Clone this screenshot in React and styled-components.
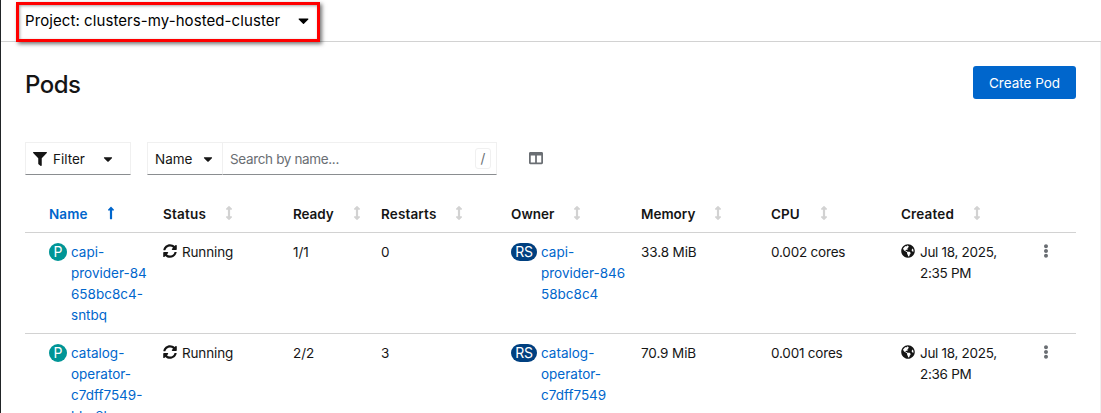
import React from 'react';
import styled, { createGlobalStyle } from 'styled-components';
import { FaFilter, FaCaretDown, FaLongArrowAltUp, FaArrowsAltV, FaColumns, FaEllipsisV, FaGlobeAmericas, FaSyncAlt } from 'react-icons/fa';

const GlobalStyle = createGlobalStyle`
  * { box-sizing: border-box; }
  body { margin: 0; background: #fff; color: #151515; font: 13.5px/21px Inter, "Open Sans", sans-serif; overflow: hidden; }
  svg { display: block; flex: none; }
`;
const PlainButton = styled.button`
  font: inherit; color: inherit; background: none; border: 0; padding: 0;
`;
const Page = styled.div`
  height: 413px; overflow: hidden; border-left: 1px solid #212427;
  display: flex; flex-direction: column;
`;
const ProjectBar = styled.header`
  height: 42px; flex: none; border-bottom: 1px solid #d2d2d2; padding: 2px 0 0 15px;
`;
const ProjectSelector = styled(PlainButton)`
  display: flex; align-items: center; justify-content: space-between;
  width: 304px; height: 40px; padding: 0 5px 3px 6px; border: 3px solid #f00;
  box-shadow: 2px 2px 4px rgba(0,0,0,.55), inset 1px 1px 3px rgba(0,0,0,.35);
  position: relative; color: #000;
`;
const Main = styled.main`
  flex: 1; border-right: 1px solid #f0f0f0; padding: 24px 24px 0;
`;
const TitleRow = styled.div`
  display: flex; justify-content: space-between; height: 76px; align-items: flex-start;
`;
const Title = styled.h1`
  margin: 3px 0 0; font-size: 24px; line-height: 31px; font-weight: 500; letter-spacing: -0.5px;
`;
const PrimaryButton = styled(PlainButton)`
  background: #06c; color: #fff; width: 103px; height: 33px; border-radius: 3px; padding-top: 2px;
`;
const Toolbar = styled.div`
  display: flex; height: 33px; align-items: stretch;
`;
const Control = styled(PlainButton)`
  border: 1px solid #f0f0f0; border-bottom-color: #8a8d90;
  display: flex; align-items: center; width: ${p => p.$w}px; margin-left: ${p => p.$ml || 0}px;
  padding: 0 0 0 7px; white-space: nowrap;
`;
const Label = styled.span`
  font-size: ${p => p.$size || 13.5}px; letter-spacing: ${p => p.$ls || 0}px; white-space: nowrap;
  margin: 0 ${p => p.$mr || 0}px 0 ${p => p.$ml || 0}px; padding-top: ${p => p.$drop || 0}px;
`;
const SearchBox = styled.div`
  width: 274px; border: 1px solid #f0f0f0; border-left: 0; border-bottom-color: #8a8d90;
  display: flex; align-items: center; justify-content: space-between; padding: 0 5px 0 7px; color: #6a6e73;
`;
const KeyHint = styled.kbd`
  width: 16px; height: 21px; border: 1px solid #f0f0f0; border-radius: 3px; font: inherit; line-height: 19px; text-align: center;
`;
const ColumnsButton = styled(PlainButton)`
  display: flex; align-items: center; margin: 0 0 2px 32px; color: #6a6e73;
`;
const Row = styled.div`
  display: grid; grid-template-columns: 114px 130px 88px 130px 130px 130px 130px 138px 1fr;
  padding: 9px 0 6px 24px; height: 101px; border-bottom: 1px solid #d2d2d2;
`;
const HeaderRow = styled(Row)`
  height: 33px; margin-top: 25px; padding: 4px 0 0 24px; font-weight: 600;
`;
const HeadCell = styled.div`
  display: flex; color: ${p => p.$active ? '#06c' : '#151515'};
  svg { color: ${p => p.$active ? '#06c' : '#d2d2d2'}; margin-top: 2px; }
`;
const HeadText = styled.span`
  width: ${p => p.$w}px; letter-spacing: ${p => p.$ls || 0}px;
`;
const Cell = styled.div`
  display: flex; align-items: flex-start; white-space: pre-line; letter-spacing: ${p => p.$ls || 0}px;
  > svg { margin: 2px 5px 0 0; }
`;
const Badge = styled.span`
  flex: none; width: ${p => p.$w}px; height: 18px; border-radius: 9px; background: ${p => p.$bg};
  color: #fff; text-align: center; font-size: 14px; line-height: 18px; margin: 1px 4px 0 0; letter-spacing: ${p => p.$ls || 0}px;
`;
const Link = styled.a`
  color: #06c; white-space: pre;
`;
const Kebab = styled(PlainButton)`
  color: #6a6e73; align-self: start; margin-top: 2px; width: 14px; height: 14px;
`;

const headers = [
  ['Name', 55, 0.1, true], ['Status', 59, 0.2], ['Ready', 57, -0.1], ['Restarts', 71, 0.15],
  ['Owner', 59, 0], ['Memory', 70, 0], ['CPU', 46, 0.1], ['Created', 69, 0.15],
];
const pods = [
  { name: 'capi-\nprovider-84\n658bc8c4-\nsntbq', ready: '1/1', restarts: '0', owner: 'capi-\nprovider-846\n58bc8c4', memory: '33.8 MiB', cpu: '0.002 cores', created: 'Jul 18, 2025,\n2:35 PM' },
  { name: 'catalog-\noperator-\nc7dff7549-\nhhg8h', ready: '2/2', restarts: '3', owner: 'catalog-\noperator-\nc7dff7549', memory: '70.9 MiB', cpu: '0.001 cores', created: 'Jul 18, 2025,\n2:36 PM' },
];

export default function App() {
  return (
    <Page>
      <GlobalStyle />
      <ProjectBar>
        <ProjectSelector><Label $size={15} $ls={0.08}>Project: clusters-my-hosted-cluster</Label><FaCaretDown size={17} /></ProjectSelector>
      </ProjectBar>
      <Main>
        <TitleRow><Title>Pods</Title><PrimaryButton>Create Pod</PrimaryButton></TitleRow>
        <Toolbar>
          <Control $w={106}><FaFilter size={14} /><Label $drop={2} $ml={6} $mr={16}>Filter</Label><FaCaretDown size={14} /></Control>
          <Control $w={76} $ml={16}><Label $drop={2} $mr={9}>Name</Label><FaCaretDown size={14} /></Control>
          <SearchBox><Label $drop={2} $ls={-0.35}>Search by name...</Label><KeyHint>/</KeyHint></SearchBox>
          <ColumnsButton><FaColumns size={14} /></ColumnsButton>
        </Toolbar>
        <HeaderRow>
          {headers.map(([text, w, ls, active]) => (
            <HeadCell key={text} $active={active}><HeadText $w={w} $ls={ls}>{text}</HeadText>{active ? <FaLongArrowAltUp size={14} /> : <FaArrowsAltV size={14} />}</HeadCell>
          ))}
        </HeaderRow>
        {pods.map(p => (
          <Row key={p.name}>
            <Cell><Badge $w={18} $bg="#009596">P</Badge><Link>{p.name}</Link></Cell>
            <Cell $ls={-0.15}><FaSyncAlt size={14} />Running</Cell>
            <Cell>{p.ready}</Cell>
            <Cell>{p.restarts}</Cell>
            <Cell><Badge $w={26} $bg="#004080" $ls={-0.3}>RS</Badge><Link>{p.owner}</Link></Cell>
            <Cell $ls={-0.1}>{p.memory}</Cell>
            <Cell $ls={-0.2}>{p.cpu}</Cell>
            <Cell $ls={-0.3}><FaGlobeAmericas size={14} />{p.created}</Cell>
            <Kebab><FaEllipsisV size={14} /></Kebab>
          </Row>
        ))}
      </Main>
    </Page>
  );
}
